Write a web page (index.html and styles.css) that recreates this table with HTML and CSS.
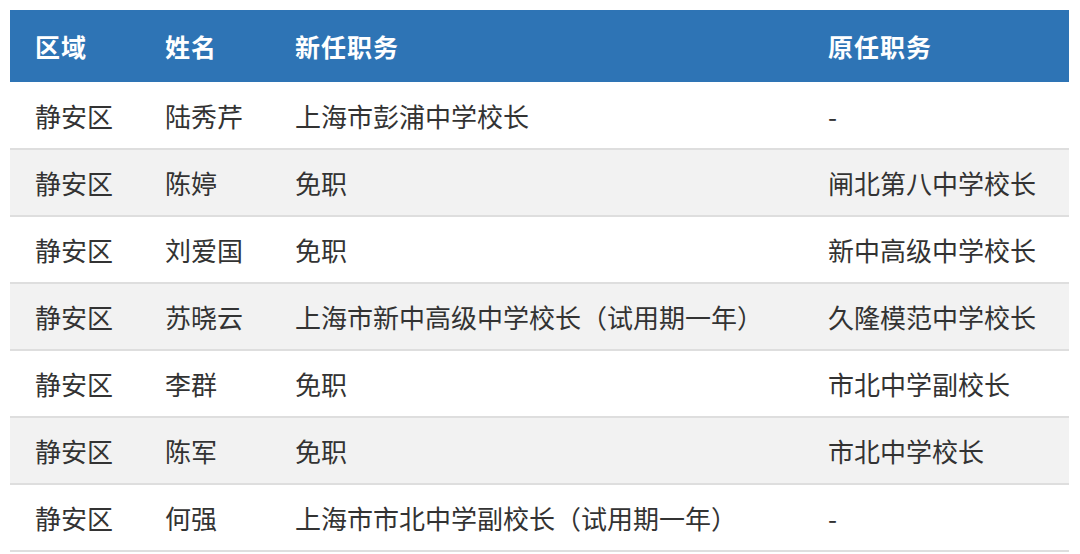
FILE: index.html
```html
<!DOCTYPE html>
<html lang="zh-CN">
<head>
<meta charset="utf-8">
<link rel="stylesheet" href="styles.css">
</head>
<body>
<table class="tbl">
  <colgroup>
    <col class="c1"><col class="c2"><col class="c3"><col class="c4">
  </colgroup>
  <thead>
    <tr><th>区域</th><th>姓名</th><th>新任职务</th><th>原任职务</th></tr>
  </thead>
  <tbody>
    <tr><td>静安区</td><td>陆秀芹</td><td>上海市彭浦中学校长</td><td>-</td></tr>
    <tr><td>静安区</td><td>陈婷</td><td>免职</td><td>闸北第八中学校长</td></tr>
    <tr><td>静安区</td><td>刘爱国</td><td>免职</td><td>新中高级中学校长</td></tr>
    <tr><td>静安区</td><td>苏晓云</td><td>上海市新中高级中学校长（试用期一年）</td><td>久隆模范中学校长</td></tr>
    <tr><td>静安区</td><td>李群</td><td>免职</td><td>市北中学副校长</td></tr>
    <tr><td>静安区</td><td>陈军</td><td>免职</td><td>市北中学校长</td></tr>
    <tr><td>静安区</td><td>何强</td><td>上海市市北中学副校长（试用期一年）</td><td>-</td></tr>
  </tbody>
</table>
</body>
</html>
```
FILE: styles.css
```css
html, body {
  margin: 0;
  padding: 0;
  background: #ffffff;
}
body {
  padding: 10px 11px 0 10px;
  font-family: "Noto Sans CJK SC", "Noto Sans", sans-serif;
}
.tbl {
  width: 1059px;
  border-collapse: collapse;
  table-layout: fixed;
}
.c1 { width: 130px; }
.c2 { width: 130px; }
.c3 { width: 533px; }
.c4 { width: auto; }
.tbl th {
  background: #2e74b5;
  color: #ffffff;
  font-weight: 700;
  font-size: 25px;
  letter-spacing: 1px;
  text-align: left;
  height: 72px;
  padding: 0 0 0 25px;
  box-sizing: border-box;
}
.tbl td {
  color: #333333;
  font-size: 26px;
  height: 67px;
  padding: 0 0 0 25px;
  box-sizing: border-box;
  border-bottom: 2px solid #dedede;
  white-space: nowrap;
}
.tbl tbody tr:nth-child(even) td {
  background: #f2f2f2;
}
```
